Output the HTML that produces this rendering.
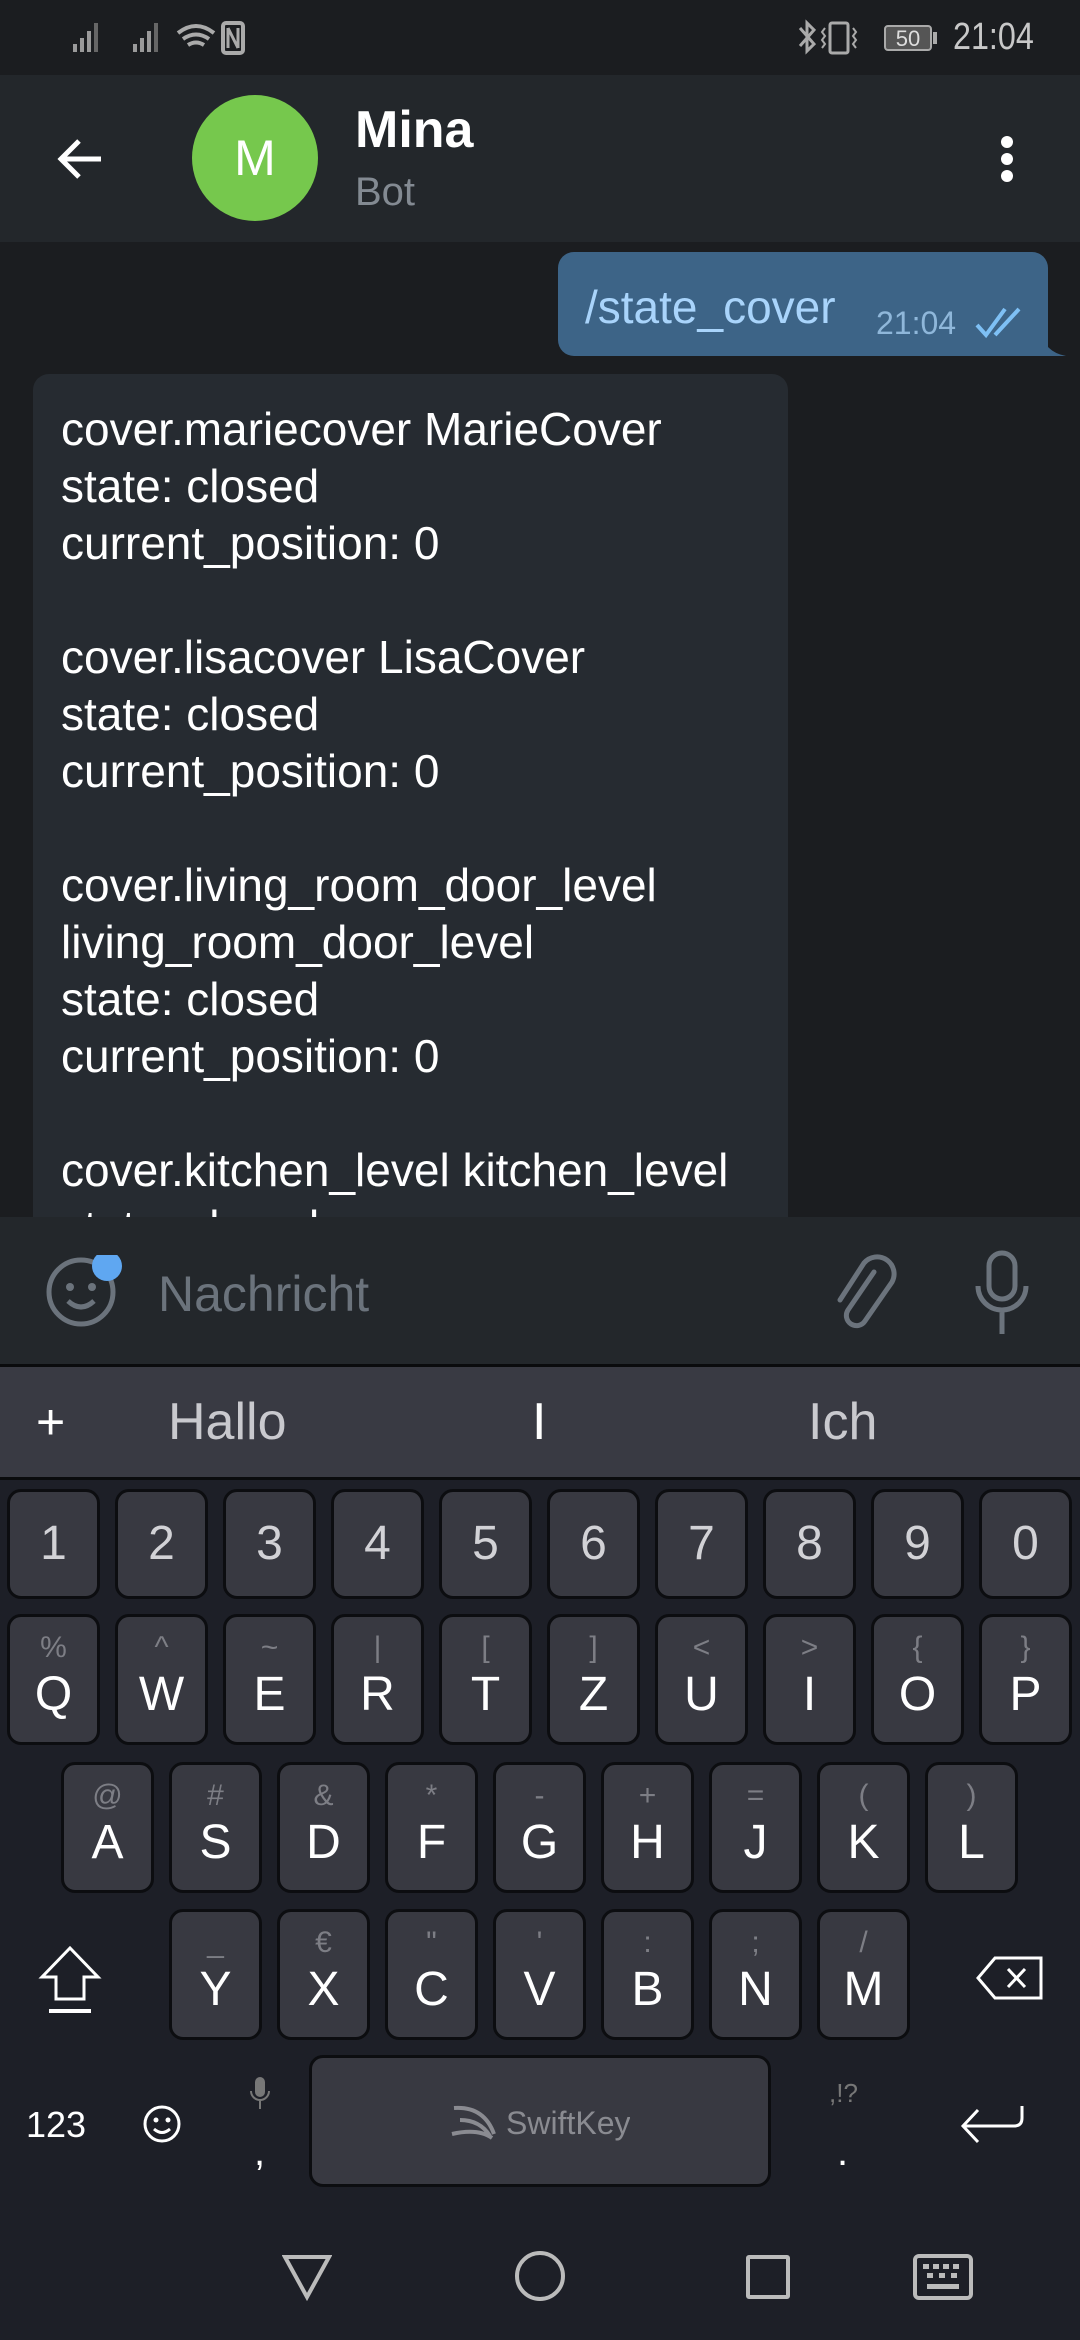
<!DOCTYPE html>
<html><head><meta charset="utf-8"><style>
*{margin:0;padding:0;box-sizing:border-box}
body{width:1080px;height:2340px;background:#1b1d20;font-family:"Liberation Sans",sans-serif;position:relative;overflow:hidden}
.a{position:absolute}
.k{position:absolute;width:93px;background:#383941;border:3px solid #0c0d10;border-radius:14px;color:#fff;text-align:center}
.k .s{position:absolute;left:0;right:0;top:14px;font-size:30px;color:#7d7e85;line-height:34px}
.k .l{position:absolute;left:0;right:0;bottom:22px;font-size:48px;line-height:50px}
.n{height:110px;font-size:48px;line-height:104px;color:#d2d2d6}
.r{height:131px}
</style></head><body>
<!-- status bar -->
<div class="a" style="left:0;top:0;width:1080px;height:75px;background:#1b1d20"></div>
<svg class="a" style="left:70px;top:18px" width="200" height="40" viewBox="0 0 200 40">
<g fill="#9a9a9a"><rect x="3" y="26" width="4" height="8"/><rect x="10" y="20" width="4" height="14"/><rect x="17" y="13" width="4" height="21"/><rect x="24" y="5" width="4" height="29" fill="#666"/>
<rect x="63" y="26" width="4" height="8"/><rect x="70" y="20" width="4" height="14"/><rect x="77" y="13" width="4" height="21"/><rect x="84" y="5" width="4" height="29" fill="#666"/></g>
<g fill="none" stroke="#aaa" stroke-width="4"><path d="M108 15 q18-14 36 0"/><path d="M113 21 q13-9 26 0"/><path d="M118 27 q8-5 16 0"/></g>
<rect x="153" y="5" width="20" height="30" rx="3" fill="none" stroke="#aaa" stroke-width="4"/><path d="M158 10 v20 M158 10 l10 20 M168 10 v20" stroke="#aaa" stroke-width="3"/>
</svg>
<svg class="a" style="left:795px;top:18px" width="150" height="40" viewBox="0 0 150 40">
<path d="M5 10 l14 16 -7 7 v-28 l7 7 -14 16" fill="none" stroke="#aaa" stroke-width="3"/>
<rect x="35" y="5" width="18" height="30" rx="2" fill="none" stroke="#aaa" stroke-width="3"/>
<path d="M30 10 l-3 4 3 4 -3 4 3 4 -3 4 M58 10 l3 4 -3 4 3 4 -3 4 3 4" fill="none" stroke="#aaa" stroke-width="2"/>
<rect x="90" y="8" width="46" height="24" rx="3" fill="#555" stroke="#aaa" stroke-width="2"/><rect x="138" y="14" width="4" height="12" fill="#aaa"/>
<text x="113" y="28" font-size="22" fill="#ddd" text-anchor="middle" font-family="Liberation Sans">50</text>
</svg>
<div class="a" style="left:953px;top:16px;font-size:38px;color:#c8c8c8;transform:scaleX(.85);transform-origin:left">21:04</div>
<!-- header -->
<div class="a" style="left:0;top:75px;width:1080px;height:167px;background:#23272b"></div>
<svg class="a" style="left:55px;top:135px" width="50" height="50" viewBox="0 0 50 50"><path d="M46 24 H6 M24 6 L6 24 L24 42" fill="none" stroke="#fff" stroke-width="5"/></svg>
<div class="a" style="left:192px;top:95px;width:126px;height:126px;border-radius:50%;background:#76c84d;color:#fff;font-size:50px;text-align:center;line-height:126px">M</div>
<div class="a" style="left:355px;top:100px;font-size:52px;color:#fff;font-weight:bold">Mina</div>
<div class="a" style="left:355px;top:170px;font-size:40px;color:#838a92">Bot</div>
<div class="a" style="left:1001px;top:136px;width:12px;height:12px;border-radius:50%;background:#fff"></div>
<div class="a" style="left:1001px;top:153px;width:12px;height:12px;border-radius:50%;background:#fff"></div>
<div class="a" style="left:1001px;top:170px;width:12px;height:12px;border-radius:50%;background:#fff"></div>
<!-- outgoing -->
<div class="a" style="left:558px;top:252px;width:490px;height:104px;background:#3d6487;border-radius:16px 16px 6px 16px"></div>
<svg class="a" style="left:1040px;top:330px" width="30" height="26"><path d="M0 0 Q4 22 26 26 H0 Z" fill="#3d6487"/></svg>
<div class="a" style="left:585px;top:280px;font-size:46px;color:#a9d4fb">/state_cover</div>
<div class="a" style="left:876px;top:305px;font-size:32px;color:#8fb7da">21:04</div>
<svg class="a" style="left:975px;top:305px" width="52" height="36" viewBox="0 0 52 36"><path d="M2 20 l9 10 L30 4 M20 30 L44 4" fill="none" stroke="#7ec0f5" stroke-width="4"/></svg>
<!-- incoming -->
<div class="a" style="left:33px;top:374px;width:755px;height:900px;background:#262b31;border-radius:16px"></div>
<div class="a" style="left:61px;top:401px;font-size:46px;line-height:57px;color:#fff;white-space:pre">cover.mariecover MarieCover
state: closed
current_position: 0

cover.lisacover LisaCover
state: closed
current_position: 0

cover.living_room_door_level
living_room_door_level
state: closed
current_position: 0

cover.kitchen_level kitchen_level
state: closed</div>
<!-- input bar -->
<div class="a" style="left:0;top:1217px;width:1080px;height:147px;background:#23272b"></div>
<svg class="a" style="left:44px;top:1255px" width="90" height="80" viewBox="0 0 90 80"><circle cx="37" cy="37" r="32" fill="none" stroke="#6b737c" stroke-width="5"/><circle cx="26" cy="32" r="4" fill="#6b737c"/><circle cx="48" cy="32" r="4" fill="#6b737c"/><path d="M24 46 q13 12 26 0" fill="none" stroke="#6b737c" stroke-width="5"/><circle cx="63" cy="11" r="15" fill="#5fa7f1"/></svg>
<div class="a" style="left:158px;top:1265px;font-size:50px;color:#6b737c">Nachricht</div>
<svg class="a" style="left:830px;top:1252px" width="70" height="80" viewBox="0 0 70 80"><path d="M40 14 L14 52 a10 10 0 0 0 17 11 L58 24 a17 17 0 0 0 -28 -19 L6 42" fill="none" stroke="#6b737c" stroke-width="5" stroke-linecap="round" transform="translate(4 6)"/></svg>
<svg class="a" style="left:972px;top:1250px" width="60" height="86" viewBox="0 0 60 86"><rect x="17" y="3" width="26" height="46" rx="13" fill="none" stroke="#6b737c" stroke-width="5"/><path d="M6 36 a24 24 0 0 0 48 0 M30 60 v24" fill="none" stroke="#6b737c" stroke-width="5"/></svg>
<!-- suggestions -->
<div class="a" style="left:0;top:1364px;width:1080px;height:3px;background:#0a0b0d"></div>
<div class="a" style="left:0;top:1367px;width:1080px;height:110px;background:#393a43"></div>
<div class="a" style="left:36px;top:1393px;font-size:50px;color:#fff">+</div>
<div class="a" style="left:168px;top:1392px;font-size:52px;color:#c9c9ce">Hallo</div>
<div class="a" style="left:532px;top:1392px;font-size:52px;color:#fff">I</div>
<div class="a" style="left:808px;top:1392px;font-size:52px;color:#c9c9ce">Ich</div>
<!-- keyboard -->
<div class="a" style="left:0;top:1477px;width:1080px;height:863px;background:#1d1f27;border-top:3px solid #0a0b0d"></div>
<div class="k n" style="left:7px;top:1489px">1</div><div class="k n" style="left:115px;top:1489px">2</div><div class="k n" style="left:223px;top:1489px">3</div><div class="k n" style="left:331px;top:1489px">4</div><div class="k n" style="left:439px;top:1489px">5</div><div class="k n" style="left:547px;top:1489px">6</div><div class="k n" style="left:655px;top:1489px">7</div><div class="k n" style="left:763px;top:1489px">8</div><div class="k n" style="left:871px;top:1489px">9</div><div class="k n" style="left:979px;top:1489px">0</div>
<div class="k r" style="left:7px;top:1614px"><div class="s">%</div><div class="l">Q</div></div>
<div class="k r" style="left:115px;top:1614px"><div class="s">^</div><div class="l">W</div></div>
<div class="k r" style="left:223px;top:1614px"><div class="s">~</div><div class="l">E</div></div>
<div class="k r" style="left:331px;top:1614px"><div class="s">|</div><div class="l">R</div></div>
<div class="k r" style="left:439px;top:1614px"><div class="s">[</div><div class="l">T</div></div>
<div class="k r" style="left:547px;top:1614px"><div class="s">]</div><div class="l">Z</div></div>
<div class="k r" style="left:655px;top:1614px"><div class="s">&lt;</div><div class="l">U</div></div>
<div class="k r" style="left:763px;top:1614px"><div class="s">&gt;</div><div class="l">I</div></div>
<div class="k r" style="left:871px;top:1614px"><div class="s">{</div><div class="l">O</div></div>
<div class="k r" style="left:979px;top:1614px"><div class="s">}</div><div class="l">P</div></div>
<div class="k r" style="left:61px;top:1762px"><div class="s">@</div><div class="l">A</div></div>
<div class="k r" style="left:169px;top:1762px"><div class="s">#</div><div class="l">S</div></div>
<div class="k r" style="left:277px;top:1762px"><div class="s">&amp;</div><div class="l">D</div></div>
<div class="k r" style="left:385px;top:1762px"><div class="s">*</div><div class="l">F</div></div>
<div class="k r" style="left:493px;top:1762px"><div class="s">-</div><div class="l">G</div></div>
<div class="k r" style="left:601px;top:1762px"><div class="s">+</div><div class="l">H</div></div>
<div class="k r" style="left:709px;top:1762px"><div class="s">=</div><div class="l">J</div></div>
<div class="k r" style="left:817px;top:1762px"><div class="s">(</div><div class="l">K</div></div>
<div class="k r" style="left:925px;top:1762px"><div class="s">)</div><div class="l">L</div></div>
<div class="k r" style="left:169px;top:1909px"><div class="s">_</div><div class="l">Y</div></div>
<div class="k r" style="left:277px;top:1909px"><div class="s">€</div><div class="l">X</div></div>
<div class="k r" style="left:385px;top:1909px"><div class="s">"</div><div class="l">C</div></div>
<div class="k r" style="left:493px;top:1909px"><div class="s">'</div><div class="l">V</div></div>
<div class="k r" style="left:601px;top:1909px"><div class="s">:</div><div class="l">B</div></div>
<div class="k r" style="left:709px;top:1909px"><div class="s">;</div><div class="l">N</div></div>
<div class="k r" style="left:817px;top:1909px"><div class="s">/</div><div class="l">M</div></div>
<svg class="a" style="left:38px;top:1945px" width="64" height="70" viewBox="0 0 64 70"><path d="M32 3 L4 32 H18 V54 H46 V32 H60 Z" fill="none" stroke="#fff" stroke-width="3"/><path d="M11 66 H53" stroke="#fff" stroke-width="4"/></svg>
<svg class="a" style="left:975px;top:1955px" width="70" height="46" viewBox="0 0 70 46"><path d="M20 3 H66 V43 H20 L3 23 Z" fill="none" stroke="#fff" stroke-width="3"/><path d="M33 14 L50 32 M50 14 L33 32" stroke="#fff" stroke-width="3"/></svg>
<div class="k" style="left:309px;top:2055px;width:462px;height:132px"></div>
<svg class="a" style="left:450px;top:2100px" width="180" height="44" viewBox="0 0 180 44"><path d="M4 8 q30 -2 40 26 M10 20 q20 0 30 16 M2 34 q26 -6 40 4" fill="none" stroke="#8a8b91" stroke-width="4"/><text x="56" y="34" font-size="32" fill="#8a8b91" font-family="Liberation Sans">SwiftKey</text></svg>
<div class="a" style="left:26px;top:2104px;font-size:36px;color:#fff">123</div>
<svg class="a" style="left:142px;top:2104px" width="40" height="40" viewBox="0 0 40 40"><circle cx="20" cy="20" r="17" fill="none" stroke="#fff" stroke-width="3"/><circle cx="14" cy="16" r="2.5" fill="#fff"/><circle cx="26" cy="16" r="2.5" fill="#fff"/><path d="M12 25 q8 7 16 0" fill="none" stroke="#fff" stroke-width="3"/></svg>
<svg class="a" style="left:248px;top:2075px" width="24" height="36" viewBox="0 0 24 36"><rect x="7" y="2" width="10" height="20" rx="5" fill="#777"/><path d="M3 16 a9 9 0 0 0 18 0 M12 26 v8" fill="none" stroke="#777" stroke-width="2"/></svg>
<div class="a" style="left:254px;top:2130px;font-size:40px;color:#fff">,</div>
<div class="a" style="left:829px;top:2078px;font-size:26px;color:#777">,!?</div>
<div class="a" style="left:837px;top:2130px;font-size:40px;color:#fff">.</div>
<svg class="a" style="left:960px;top:2104px" width="66" height="42" viewBox="0 0 66 42"><path d="M62 2 V14 q0 8 -8 8 H4 M18 6 L3 22 L18 38" fill="none" stroke="#fff" stroke-width="3"/></svg>
<!-- nav -->
<svg class="a" style="left:282px;top:2253px" width="50" height="48" viewBox="0 0 50 48"><path d="M3 4 H47 L25 44 Z" fill="none" stroke="#bbb" stroke-width="4"/></svg>
<div class="a" style="left:515px;top:2251px;width:50px;height:50px;border:4px solid #bbb;border-radius:50%"></div>
<div class="a" style="left:746px;top:2255px;width:44px;height:44px;border:4px solid #bbb;border-radius:3px"></div>
<svg class="a" style="left:913px;top:2254px" width="60" height="46" viewBox="0 0 60 46"><rect x="2" y="2" width="56" height="42" rx="4" fill="none" stroke="#bbb" stroke-width="4"/><g fill="#bbb"><rect x="10" y="10" width="6" height="5"/><rect x="20" y="10" width="6" height="5"/><rect x="30" y="10" width="6" height="5"/><rect x="40" y="10" width="6" height="5"/><rect x="14" y="19" width="6" height="5"/><rect x="26" y="19" width="6" height="5"/><rect x="38" y="19" width="6" height="5"/><rect x="14" y="30" width="32" height="5"/></g></svg>
</body></html>
